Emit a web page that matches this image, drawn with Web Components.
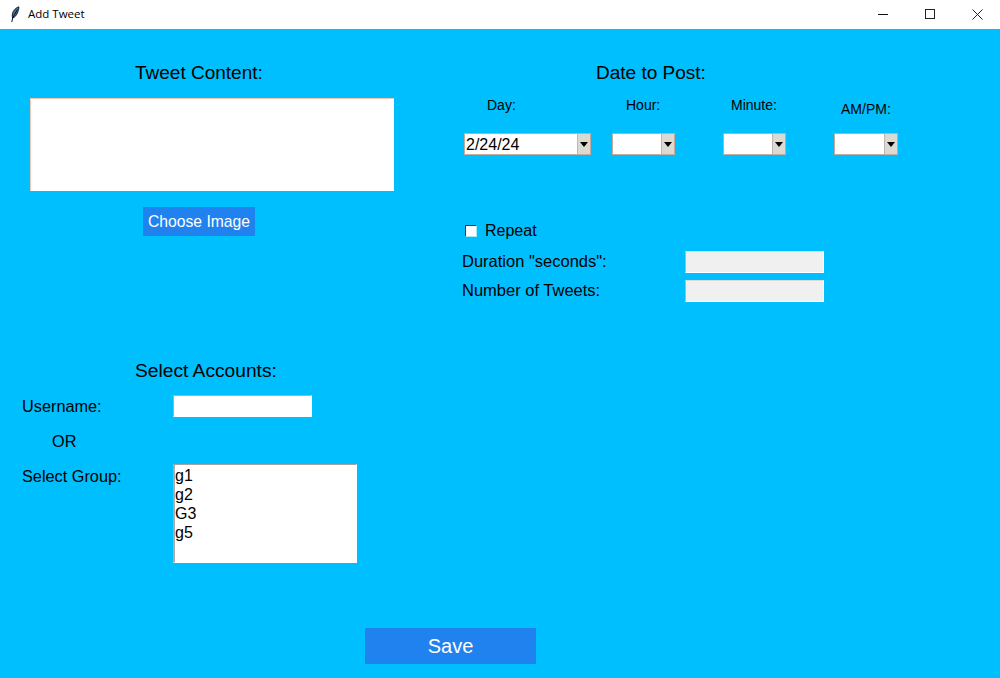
<!DOCTYPE html>
<html lang="en">
<head>
<meta charset="utf-8">
<title>Add Tweet</title>
<style>
html,body{margin:0;padding:0;width:1000px;height:678px;overflow:hidden;background:#00bfff;font-family:"Liberation Sans",Arial,sans-serif;color:#000}
</style>
</head>
<body>
<add-tweet-app></add-tweet-app>
<script>
function def(name, css, html){
  customElements.define(name, class extends HTMLElement{
    constructor(){super();const r=this.attachShadow({mode:"open"});r.innerHTML="<style>"+css+"</style>"+html;}
  });
}
def("title-bar",`
:host{display:flex;align-items:center;height:29px;background:#fff;box-sizing:border-box;font:11.5px "Open Sans","Liberation Sans",sans-serif;color:#000}
.ico{display:block;margin:-1px 7px 0 9px;flex:none}
.t{flex:1;margin-top:-2px}
.b{width:47px;height:29px;display:flex;align-items:center;justify-content:center;flex:none}
.b svg{margin-top:-1px}
.b1 svg{margin-left:1px}
.b2 svg{margin-left:1px}
.b3 svg{margin-left:1px}
`,`
<svg class="ico" width="12" height="17" viewBox="0 0 12 17"><path d="M9.800 .800C7 1.800 4.200 4.300 3.400 7.800c-.4 1.700-.2 3.100.2 4.200C6 11.400 7.900 8.800 8.900 5.800 9.600 4 10 2.200 9.800.800z" fill="#3f6fb0" stroke="#111" stroke-width=".9"/><path d="M8.300 3.600 3.700 12 2.800 16" fill="none" stroke="#111" stroke-width="1"/></svg>
<span class="t"><slot></slot></span>
<span class="b b1"><svg width="11" height="11"><path d="M0 5.500h10" stroke="#111" fill="none"/></svg></span>
<span class="b b2"><svg width="11" height="11"><rect x=".5" y=".5" width="9" height="9" fill="none" stroke="#222"/></svg></span>
<span class="b b3"><svg width="11" height="11"><path d="M.5.500l10 10M10.500.500l-10 10" stroke="#222" fill="none"/></svg></span>
`);
def("tk-label",`
:host{display:block;font-size:16.300px;line-height:20px;white-space:nowrap;color:#000}
:host([size=head]){font-size:19px}
:host([size=small]){font-size:14px}
`,`<slot></slot>`);
def("tk-button",`
:host{display:flex;align-items:center;justify-content:center;background:#1f82ee;color:#fff;font-size:15.700px;box-sizing:border-box;white-space:nowrap}
:host([big]){font-size:20px}
`,`<slot></slot>`);
def("tk-entry",`
:host{display:block;box-sizing:border-box;height:22px;background:#fff;border-style:solid;border-width:1px;border-color:#b8aaa0 #fff #fff #b8aaa0}
:host([disabled]){background:#f0f0f0;border-color:#e0d8d2 #fff #fff #d8a898}
`,``);
def("tk-combo",`
:host{display:flex;box-sizing:border-box;height:22px;background:#fff;border:1px solid #c4ab9c;font-size:16px;line-height:21px}
.v{flex:1;padding-left:1px;overflow:hidden;white-space:nowrap}
.a{width:12px;flex:none;background:#dcd9d2;border-left:1px solid #bdb8b0;display:flex;align-items:center;justify-content:center}
`,`<span class="v"><slot></slot></span><span class="a"><svg width="8" height="5"><path d="M0 0h8L4 5z" fill="#000"/></svg></span>`);
def("tk-check",`
:host{display:flex;align-items:center;font-size:16px;line-height:20px}
.c{width:12px;height:12px;background:#fff;box-sizing:border-box;border:1px solid;border-color:#333 #9fe6ff #9fe6ff #333;margin:0 8px 0 3px;flex:none}
`,`<span class="c"></span><slot></slot>`);
def("tk-listbox",`
:host{display:block;box-sizing:border-box;background:#fff;border-style:solid;border-width:1px 1px 1px 2px;border-color:#aaa29c #fff #fff #b0aaa4;font-size:16px;line-height:19px;padding:1px 0 0 0}
`,`<slot></slot>`);
def("add-tweet-app",`
:host{display:block;width:1000px;height:678px;overflow:hidden}
.body{display:grid;grid-template-columns:462px 1fr;height:599px}
.left,.right{display:flex;flex-direction:column;align-items:flex-start}
.h1{margin:34px 0 0 135px}
.area{display:block;width:364px;height:93px;margin:15px 0 0 30px;background:#fff;box-sizing:border-box;border-style:solid;border-width:1px 0 0 1px;border-color:#f0c8b8}
.choose{width:112px;height:29px;margin:16px 0 0 143px}
.h2{margin:125px 0 0 135px;font-size:19.200px}
.acct{display:grid;grid-template-columns:151px auto;margin:14px 0 0 22px;align-items:start}
.acct tk-entry{width:139px}
.or{margin:14px 0 13px 30px;grid-column:1/3}
.u{padding-top:1px}
.g{padding-top:2px}
.acct tk-listbox{width:184px;height:99px}
.h3{margin:34px 0 0 134px}
.cols{display:grid;grid-template-columns:148px 111px 111px 64px;margin:12px 0 0 2px;align-items:start}
.cols tk-combo{margin-top:14px}
.cols .day{margin-left:23px}
.cols .hour{margin-left:14px}
.cols .min{margin-left:8px}
.cols .ampm{margin:4px 0 0 7px}
.cols .c1{width:127px}
.cols .c2{width:63px}
.check{margin:66px 0 0 0}
.form{display:grid;grid-template-columns:223px 139px;row-gap:7px;margin-top:10px;align-items:center}
.form tk-label{margin-top:-2px;font-size:16.500px}
.foot{display:flex;padding-left:365px}
.save{width:171px;height:36px}
`,`
<title-bar>Add Tweet</title-bar>
<div class="body">
  <section class="left">
    <tk-label size="head" class="h1">Tweet Content:</tk-label>
    <div class="area"></div>
    <tk-button class="choose">Choose Image</tk-button>
    <tk-label size="head" class="h2">Select Accounts:</tk-label>
    <div class="acct">
      <tk-label class="u">Username:</tk-label><tk-entry></tk-entry>
      <tk-label class="or">OR</tk-label>
      <tk-label class="g">Select Group:</tk-label>
      <tk-listbox><div>g1</div><div>g2</div><div>G3</div><div>g5</div></tk-listbox>
    </div>
  </section>
  <section class="right">
    <tk-label size="head" class="h3">Date to Post:</tk-label>
    <div class="cols">
      <tk-label size="small" class="day">Day:</tk-label>
      <tk-label size="small" class="hour">Hour:</tk-label>
      <tk-label size="small" class="min">Minute:</tk-label>
      <tk-label size="small" class="ampm">AM/PM:</tk-label>
      <tk-combo class="c1">2/24/24</tk-combo>
      <tk-combo class="c2"></tk-combo>
      <tk-combo class="c2"></tk-combo>
      <tk-combo></tk-combo>
    </div>
    <tk-check class="check">Repeat</tk-check>
    <div class="form">
      <tk-label>Duration "seconds":</tk-label><tk-entry disabled></tk-entry>
      <tk-label>Number of Tweets:</tk-label><tk-entry disabled></tk-entry>
    </div>
  </section>
</div>
<div class="foot"><tk-button big class="save">Save</tk-button></div>
`);
</script>
</body>
</html>
